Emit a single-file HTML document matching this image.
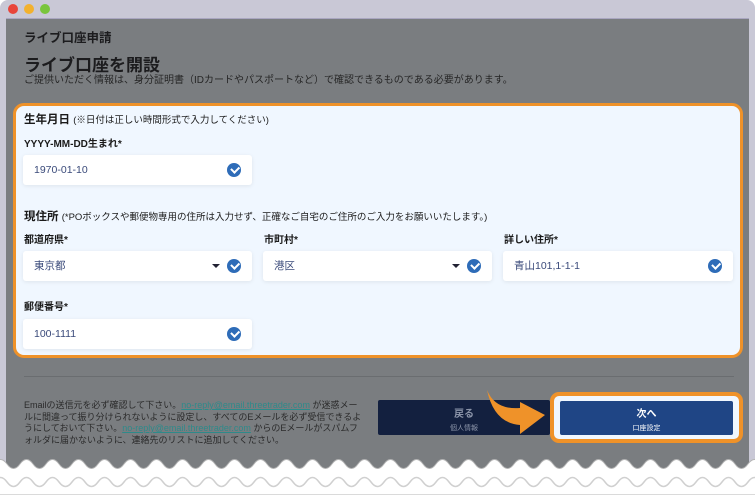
<!DOCTYPE html>
<html><head><meta charset="utf-8"><style>
*{margin:0;padding:0;box-sizing:border-box}
body{width:755px;height:495px;overflow:hidden;background:#fff;font-family:"Liberation Sans","Noto Sans CJK JP",sans-serif;position:relative}
.frame{position:absolute;left:0;top:0;width:755px;height:480px;background:#c9c8d6;border-radius:8px 8px 0 0}
.dot{position:absolute;top:4px;width:10px;height:10px;border-radius:50%}
.content{position:absolute;left:6px;top:18px;width:743px;height:470px;background:#7a7d80;border-top:1px solid #a9a6c0}
.t{position:absolute;color:#1c1c1e;white-space:nowrap;line-height:1}
.panel{position:absolute;left:13px;top:103px;width:730px;height:255px;background:#f0f7ff;border:3px solid #ef9229;border-radius:11px}
.lbl{position:absolute;font-size:10px;font-weight:bold;color:#1a1a1a;white-space:nowrap}
.in{position:absolute;height:30px;background:#fff;border-radius:3px;box-shadow:0 1px 4px rgba(0,0,0,.08);font-size:10.5px;color:#3a4a7a;padding-left:11px;line-height:30px}
.ck{position:absolute;right:11px;top:8px;width:14px;height:14px;border-radius:50%;background:#2e6cb8}
.ck:after{content:"";position:absolute;left:4px;top:3px;width:6px;height:3.5px;border-left:2px solid #fff;border-bottom:2px solid #fff;transform:rotate(-45deg)}
.dd{position:absolute;right:32px;top:13px;width:0;height:0;border-left:4px solid transparent;border-right:4px solid transparent;border-top:4px solid #223}
a{color:#2e8a8a;text-decoration:underline}
</style></head><body>
<div class="frame">
<div class="dot" style="left:8px;background:#e8443a"></div>
<div class="dot" style="left:24px;background:#f2b12e"></div>
<div class="dot" style="left:40px;background:#79c53c"></div>
</div>
<div class="content"></div>
<div class="t" style="left:24px;top:32px;font-size:12.5px;font-weight:bold">ライブ口座申請</div>
<div class="t" style="left:24px;top:57px;font-size:17px;font-weight:bold">ライブ口座を開設</div>
<div class="t" style="left:24px;top:76px;font-size:10px;color:#262626">ご提供いただく情報は、身分証明書（IDカードやパスポートなど）で確認できるものである必要があります。</div>
<div class="panel"></div>
<div class="lbl" style="left:24px;top:111px;font-size:11.5px">生年月日 <span style="font-weight:normal;font-size:9.5px">(※日付は正しい時間形式で入力してください)</span></div>
<div class="lbl" style="left:24px;top:135px">YYYY-MM-DD生まれ*</div>
<div class="in" style="left:23px;top:155px;width:229px">1970-01-10<div class="ck"></div></div>
<div class="lbl" style="left:24px;top:208px;font-size:11.5px">現住所 <span style="font-weight:normal;font-size:9.5px">(*POボックスや郵便物専用の住所は入力せず、正確なご自宅のご住所のご入力をお願いいたします。)</span></div>
<div class="lbl" style="left:24px;top:231px">都道府県*</div>
<div class="lbl" style="left:264px;top:231px">市町村*</div>
<div class="lbl" style="left:504px;top:231px">詳しい住所*</div>
<div class="in" style="left:23px;top:251px;width:229px">東京都<div class="dd"></div><div class="ck"></div></div>
<div class="in" style="left:263px;top:251px;width:229px">港区<div class="dd"></div><div class="ck"></div></div>
<div class="in" style="left:503px;top:251px;width:230px">青山101,1-1-1<div class="ck"></div></div>
<div class="lbl" style="left:24px;top:298px">郵便番号*</div>
<div class="in" style="left:23px;top:319px;width:229px">100-1111<div class="ck"></div></div>
<div style="position:absolute;left:24px;top:376px;width:710px;height:1px;background:#6a6d70"></div>
<div class="t" style="left:24px;top:400px;font-size:9px;line-height:11.5px;color:#2a2a2a;white-space:normal;width:342px">Emailの送信元を必ず確認して下さい。<a>no-reply@email.threetrader.com</a> が迷惑メールに間違って振り分けられないように設定し、すべてのEメールを必ず受信できるようにしておいて下さい。<a>no-reply@email.threetrader.com</a> からのEメールがスパムフォルダに届かないように、連絡先のリストに追加してください。</div>
<div style="position:absolute;left:378px;top:400px;width:172px;height:35px;background:#13203f;border-radius:2px;color:#8a93a8;text-align:center">
<div style="font-size:10px;font-weight:bold;margin-top:5px">戻る</div><div style="font-size:7px;margin-top:3px">個人情報</div></div>
<div style="position:absolute;left:550px;top:392px;width:193px;height:51px;border:4px solid #ef9229;border-radius:9px;background:#f0f7ff"></div>
<div style="position:absolute;left:560px;top:401px;width:173px;height:34px;background:#1f4585;border-radius:2px;color:#fff;text-align:center">
<div style="font-size:10px;font-weight:bold;margin-top:4px">次へ</div><div style="font-size:7px;margin-top:3px">口座設定</div></div>
<svg style="position:absolute;left:480px;top:385px" width="70" height="55"><path d="M7 5 Q15 25 40 23 L40 17 L65 30 L40 49 L40 40 Q14 38 7 5Z" fill="#ef9229"/></svg>
<svg style="position:absolute;left:0;top:450px" width="755" height="45">
<path d="M-6 14 q6.5 -9 13 0 t13 0 t13 0 t13 0 t13 0 t13 0 t13 0 t13 0 t13 0 t13 0 t13 0 t13 0 t13 0 t13 0 t13 0 t13 0 t13 0 t13 0 t13 0 t13 0 t13 0 t13 0 t13 0 t13 0 t13 0 t13 0 t13 0 t13 0 t13 0 t13 0 t13 0 t13 0 t13 0 t13 0 t13 0 t13 0 t13 0 t13 0 t13 0 t13 0 t13 0 t13 0 t13 0 t13 0 t13 0 t13 0 t13 0 t13 0 t13 0 t13 0 t13 0 t13 0 t13 0 t13 0 t13 0 t13 0 t13 0 t13 0 t13 0 t13 0 L770 45 L-6 45Z" fill="#fff" stroke="#b5b5b5" stroke-width="1"/>
<path d="M-6 32 q6.5 -9 13 0 t13 0 t13 0 t13 0 t13 0 t13 0 t13 0 t13 0 t13 0 t13 0 t13 0 t13 0 t13 0 t13 0 t13 0 t13 0 t13 0 t13 0 t13 0 t13 0 t13 0 t13 0 t13 0 t13 0 t13 0 t13 0 t13 0 t13 0 t13 0 t13 0 t13 0 t13 0 t13 0 t13 0 t13 0 t13 0 t13 0 t13 0 t13 0 t13 0 t13 0 t13 0 t13 0 t13 0 t13 0 t13 0 t13 0 t13 0 t13 0 t13 0 t13 0 t13 0 t13 0 t13 0 t13 0 t13 0 t13 0 t13 0 t13 0 t13 0" fill="none" stroke="#d0d0d0" stroke-width="1.5"/>
</svg>
</body></html>
